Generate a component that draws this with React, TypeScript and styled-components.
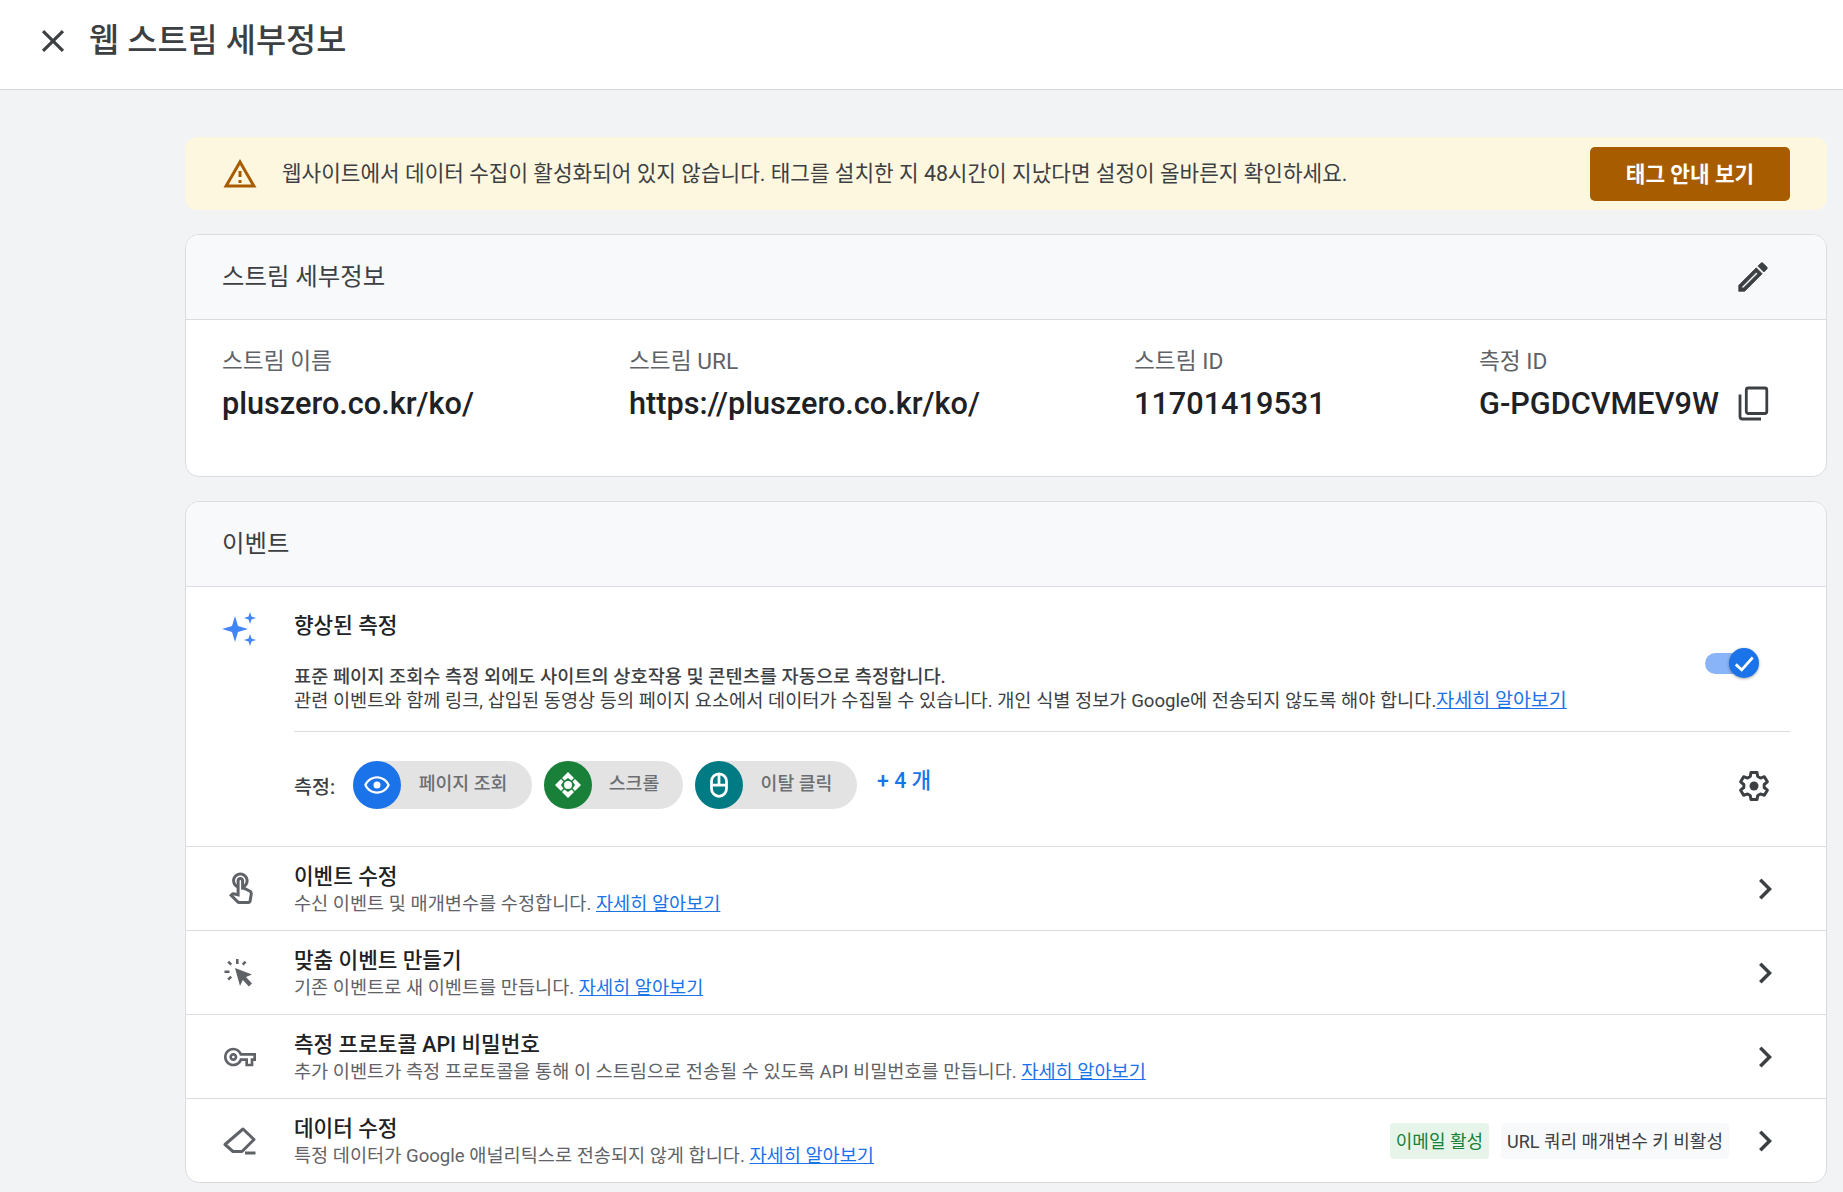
import React from "react";
import styled, { createGlobalStyle } from "styled-components";

const Global = createGlobalStyle`
  html, body { margin: 0; padding: 0; background: #f1f3f4; }
  body { font-family: Roboto, "Noto Sans CJK KR", sans-serif; color: #202124; }
  * { box-sizing: border-box; }
`;

const Page = styled.div`
  width: 1843px;
  height: 1192px;
  overflow: hidden;
  background: #f1f3f4;
`;
const TopBar = styled.header`
  height: 90px;
  background: #fff;
  border-bottom: 1px solid #d5d7da;
  display: flex;
  align-items: center;
  padding-left: 34px;
  gap: 17px;
  padding-bottom: 8px;
`;
const PageTitle = styled.h1`
  margin: 0 0 7px;
  font-size: 32.75px;
  font-weight: 500;
  color: #3c4043;
`;
const Main = styled.main`
  padding: 47px 16px 0 185px;
  display: flex;
  flex-direction: column;
`;
const Alert = styled.div`
  height: 73px;
  background: #fef7e0;
  border-radius: 12px;
  display: flex;
  align-items: center;
  padding: 0 37px;
  margin-bottom: 24px;
`;
const AlertText = styled.div`
  flex: 1;
  margin: 0 0 4px 24px;
  font-size: 21.33px;
  color: #3c4043;
`;
const AlertButton = styled.button`
  width: 200px;
  height: 54px;
  flex: none;
  border: 0;
  border-radius: 5px;
  padding: 0 0 2px;
  background: #a85c00;
  color: #fff;
  font: 700 21.33px Roboto, "Noto Sans CJK KR", sans-serif;
`;
const Card = styled.section<{ $mb?: number }>`
  background: #fff;
  border: 1px solid #dadce0;
  border-radius: 14px;
  overflow: hidden;
  margin-bottom: ${(p) => p.$mb ?? 0}px;
`;
const CardHeader = styled.div`
  height: 85px;
  background: #f8f9fa;
  border-bottom: 1px solid #dadce0;
  display: flex;
  align-items: center;
  justify-content: space-between;
  padding: 0 54px 0 36px;
`;
const CardTitle = styled.h2`
  margin: 0 0 6px;
  font-size: 24.4px;
  font-weight: 400;
  color: #3c4043;
`;
const DataRow = styled.div`
  height: 156px;
  display: grid;
  grid-template-columns: 407px 505px 345px 1fr;
  padding: 25px 56px 0 36px;
`;
const Field = styled.div`
  display: flex;
  flex-direction: column;
`;
const FieldLabel = styled.div`
  font-size: 22.7px;
  line-height: 33px;
  color: #5f6368;
`;
const FieldValue = styled.div`
  margin-top: 4px;
  font-size: 30.67px;
  line-height: 44px;
  font-weight: 500;
  color: #202124;
  display: flex;
  align-items: center;
  justify-content: space-between;
`;
const Enhanced = styled.div`
  height: 260px;
  display: flex;
  border-bottom: 1px solid #dadce0;
  padding: 25px 36px 0 37px;
`;
const IconCol = styled.div`
  width: 71px;
  flex: none;
  margin-left: -1px;
  margin-right: 1px;
`;
const EnhBody = styled.div`
  flex: 1;
`;
const EnhTop = styled.div`
  height: 120px;
  border-bottom: 1px solid #dadce0;
  display: flex;
  justify-content: space-between;
`;
const EnhTitle = styled.div`
  font-size: 21.33px;
  line-height: 28px;
  font-weight: 500;
  color: #202124;
`;
const EnhDesc = styled.div`
  margin-top: 26px;
  font-size: 18.65px;
  line-height: 23px;
  color: #3c4043;
`;
const Strong = styled.div`
  font-weight: 500;
`;
const Link = styled.a`
  color: #1a73e8;
  text-decoration: underline;
`;
const EnhLink = styled(Link)`
  font-size: 19.5px;
`;
const Toggle = styled.div`
  position: relative;
  width: 40px;
  height: 21px;
  margin: 41px 45px 0 0;
  border-radius: 11px;
  background: #8ab4f8;
`;
const Knob = styled.div`
  position: absolute;
  right: -14px;
  top: -5px;
  width: 30px;
  height: 30px;
  border-radius: 50%;
  background: #1a73e8;
  box-shadow: 0 1px 3px rgba(0, 0, 0, 0.35);
  display: flex;
  align-items: center;
  justify-content: center;
`;
const Metrics = styled.div`
  display: flex;
  align-items: center;
  margin-top: 29px;
  height: 48px;
`;
const MetricLabel = styled.div`
  width: 59px;
  font-size: 19.5px;
  font-weight: 500;
  color: #3c4043;
`;
const Pill = styled.div<{ $w: number }>`
  width: ${(p) => p.$w}px;
  height: 48px;
  margin-right: 12px;
  border-radius: 24px;
  background: #e3e3e3;
  display: flex;
  align-items: center;
  font-size: 18.3px;
  font-weight: 500;
  color: #6b6e72;
`;
const PillDot = styled.div<{ $c: string }>`
  width: 48px;
  height: 48px;
  flex: none;
  border-radius: 50%;
  background: ${(p) => p.$c};
  display: flex;
  align-items: center;
  justify-content: center;
`;
const PillText = styled.span`
  flex: 1;
  text-align: center;
  padding: 0 7px 6px 0;
`;
const More = styled.div`
  margin: -13px 0 0 8px;
  font-size: 21.33px;
  font-weight: 500;
  color: #1a73e8;
  flex: 1;
`;
const GearWrap = styled.div`
  padding: 2px 18px 0 0;
  display: flex;
`;
const Row = styled.div<{ $last?: boolean }>`
  height: ${(p) => (p.$last ? 83 : 84)}px;
  display: flex;
  align-items: center;
  padding: 0 40px 0 37px;
  border-bottom: ${(p) => (p.$last ? "0" : "1px solid #dadce0")};
`;
const RowIcon = styled.div<{ $pl?: number }>`
  width: 71px;
  flex: none;
  display: flex;
  padding-left: ${(p) => p.$pl ?? 0}px;
`;
const RowText = styled.div`
  flex: 1;
  margin-top: 4px;
`;
const RowTitle = styled.div`
  font-size: 21.33px;
  line-height: 28px;
  font-weight: 500;
  color: #202124;
`;
const RowSub = styled.div`
  font-size: 18.62px;
  line-height: 26.5px;
  color: #5f6368;
`;
const Chip = styled.div<{ $green?: boolean }>`
  height: 36px;
  padding: 0 6px 2px;
  margin-right: 12px;
  border-radius: 4px;
  display: flex;
  align-items: center;
  font-size: 18px;
  background: ${(p) => (p.$green ? "#e6f4ea" : "#f8f9fa")};
  color: ${(p) => (p.$green ? "#188038" : "#3c4043")};
`;
const ChipGroup = styled.div`
  display: flex;
  margin-right: 3px;
`;

const I = ({ d, s = 24, c = "#3c4043", w = 0 }: { d: string; s?: number; c?: string; w?: number }) => (
  <svg width={s} height={s} viewBox="0 0 24 24" fill={c} stroke={c} strokeWidth={w} style={{ flex: "none" }}>
    <path d={d} />
  </svg>
);

const close = "M19 6.41L17.59 5 12 10.59 6.41 5 5 6.41 10.59 12 5 17.59 6.41 19 12 13.41 17.59 19 19 17.59 13.41 12z";
const warn = "M12 5.99L19.53 19H4.47L12 5.99M12 2L1 21h22L12 2zm1 14h-2v2h2v-2zm0-6h-2v4h2v-4z";
const edit = "M3 17.25V21h3.75L17.81 9.94l-3.75-3.75L3 17.25zM5.92 19H5v-.92l9.06-9.06.92.92L5.92 19zM20.71 5.63l-2.34-2.34c-.2-.2-.45-.29-.71-.29s-.51.1-.7.29l-1.83 1.83 3.75 3.75 1.83-1.83c.39-.39.39-1.02 0-1.41z";
const chevron = "M10 6L8.59 7.41 13.17 12l-4.58 4.59L10 18l6-6z";
const touch = "M18.19,12.44l-3.24-1.62c1.29-1,2.12-2.56,2.12-4.32c0-3.03-2.47-5.5-5.5-5.5s-5.5,2.47-5.5,5.5c0,2.13,1.22,3.98,3,4.89v3.26c-2.15-0.46-2.02-0.44-2.26-0.44c-0.53,0-1.03,0.21-1.41,0.59L4,16.22l5.09,5.09C9.52,21.75,10.12,22,10.74,22h6.3c0.98,0,1.81-0.7,1.97-1.67l0.8-4.71C20.03,14.32,19.38,13.04,18.19,12.44z M17.84,15.29L17.04,20h-6.3c-0.09,0-0.17-0.04-0.24-0.1l-3.68-3.68l4.25,0.89V6.5c0-0.28,0.22-0.5,0.5-0.5c0.28,0,0.5,0.22,0.5,0.5v6h1.76l3.46,1.73C17.69,14.43,17.91,14.86,17.84,15.29z M8.07,6.5c0-1.93,1.57-3.5,3.5-3.5s3.5,1.57,3.5,3.5c0,0.95-0.38,1.81-1,2.44V6.5c0-1.38-1.12-2.5-2.5-2.5c-1.38,0-2.5,1.12-2.5,2.5v2.44C8.45,8.31,8.07,7.45,8.07,6.5z";
const key = "M22 19h-6v-4h-2.68c-1.14 2.42-3.6 4-6.32 4-3.86 0-7-3.14-7-7s3.14-7 7-7c2.72 0 5.17 1.58 6.32 4H24v6h-2v4zm-4-2h2v-4h2v-2H11.94l-.23-.67C11.01 8.34 9.11 7 7 7c-2.76 0-5 2.24-5 5s2.24 5 5 5c2.11 0 4.01-1.34 4.71-3.33l.23-.67H18v4zM7 15c-1.65 0-3-1.35-3-3s1.35-3 3-3 3 1.35 3 3-1.35 3-3 3zm0-4c-.55 0-1 .45-1 1s.45 1 1 1 1-.45 1-1-.45-1-1-1z";
const eye = "M12 6.5c3.79 0 7.17 2.13 8.82 5.5-1.65 3.37-5.02 5.5-8.82 5.5S4.83 15.37 3.18 12C4.83 8.63 8.21 6.5 12 6.5m0-2C7 4.5 2.73 7.61 1 12c1.73 4.39 6 7.5 11 7.5s9.27-3.11 11-7.5c-1.73-4.39-6-7.5-11-7.5zM12 9a3 3 0 1 1 0 6 3 3 0 0 1 0-6z";

const Gear = () => (
  <svg width="36" height="36" viewBox="0 0 24 24" style={{ flex: "none" }}>
    <path
      fill="none"
      stroke="#3c4043"
      strokeWidth="2"
      strokeLinejoin="round"
      d="M10 3h4l.5 2.700 1.800 1 2.600-.9 2 3.400-2.100 1.800v2l2.100 1.800-2 3.400-2.600-.9-1.800 1L14 21h-4l-.5-2.700-1.800-1-2.600.9-2-3.400 2.100-1.800v-2L3.100 9.200l2-3.400 2.600.9 1.800-1z"
    />
    <circle cx="12" cy="12" r="3" fill="#3c4043" />
  </svg>
);
const Copy = () => (
  <svg width="33" height="36" viewBox="0 0 33 36" fill="none" stroke="#3c4043" strokeWidth="2.8">
    <rect x="9.3" y="2" width="20.5" height="25.5" rx="2" />
    <path d="M3 8.5V30.5a2.5 2.5 0 0 0 2.5 2.5H24" />
  </svg>
);
const Sparkle = () => (
  <svg width="36" height="34" viewBox="0 0 36 34" fill="#4285f4">
    <path d="M13 4 16 14 26 17 16 20 13 30 10 20 0 17 10 14z" />
    <path d="M28 0 29.500 4.500 34 6 29.500 7.500 28 12 26.500 7.500 22 6 26.500 4.500z" />
    <path d="M28 22 29.500 26.500 34 28 29.500 29.500 28 34 26.500 29.500 22 28 26.500 26.500z" />
  </svg>
);
const Cursor = () => (
  <svg width="32" height="30" viewBox="0 0 30 30" fill="#5f6368">
    <path d="M11 10 28 16.500 22 19 28 25.500 24.800 28.500 18.800 22 16 28z" />
    <path d="M12 1h2.600v5H12zM.5 12.500h5v2.600h-5z" />
    <path d="m3.300 4.600 1.800-1.800 3 3-1.800 1.800zM20.700 2.800l1.800 1.800-2.900 3-1.800-1.800zM6.300 17.700l1.800 1.800-3 3-1.800-1.800z" />
  </svg>
);
const Eraser = () => (
  <svg width="34" height="30" viewBox="0 0 34 30" fill="none" stroke="#5f6368" strokeWidth="3" strokeLinejoin="round">
    <path d="M20 3 31 13.500 19 25.500H10L2 18.500z" />
    <path d="M22 27h10.500" />
  </svg>
);
const ScrollMark = () => (
  <svg width="30" height="30" viewBox="0 0 30 30" fill="#fff">
    <path d="M15 2 21 8 18.600 10.400 15 8 11.400 10.400 9 8zM15 28 9 22 11.400 19.600 15 22 18.600 19.600 21 22zM2 15 8 9 10.400 11.400 8 15 10.400 18.600 8 21zM28 15 22 21 19.600 18.600 22 15 19.600 11.400 22 9z" />
    <circle cx="15" cy="15" r="4" />
  </svg>
);
const MouseMark = () => (
  <svg width="30" height="30" viewBox="0 0 24 24" fill="none" stroke="#fff" strokeWidth="2.2">
    <rect x="6" y="3" width="12" height="18" rx="6" />
    <path d="M12 3v9M6.500 12h11" />
  </svg>
);
const Check = () => (
  <svg width="22" height="22" viewBox="0 0 24 24" fill="none" stroke="#fff" strokeWidth="3">
    <path d="M3 13.500 9.500 19.500 21.500 6" />
  </svg>
);

const rows = [
  { icon: <I d={touch} s={36} c="#5f6368" />, pl: 0, title: "이벤트 수정", sub: "수신 이벤트 및 매개변수를 수정합니다. " },
  { icon: <Cursor />, pl: 0, title: "맞춤 이벤트 만들기", sub: "기존 이벤트로 새 이벤트를 만듭니다. " },
  { icon: <I d={key} s={32} c="#5f6368" />, pl: 1, title: "측정 프로토콜 API 비밀번호", sub: "추가 이벤트가 측정 프로토콜을 통해 이 스트림으로 전송될 수 있도록 API 비밀번호를 만듭니다. " },
];

export default function App() {
  return (
    <Page>
      <Global />
      <TopBar>
        <I d={close} s={38} c="#3c4043" />
        <PageTitle>웹 스트림 세부정보</PageTitle>
      </TopBar>
      <Main>
        <Alert>
          <I d={warn} s={36} c="#a85c00" />
          <AlertText>웹사이트에서 데이터 수집이 활성화되어 있지 않습니다. 태그를 설치한 지 48시간이 지났다면 설정이 올바른지 확인하세요.</AlertText>
          <AlertButton>태그 안내 보기</AlertButton>
        </Alert>
        <Card $mb={24}>
          <CardHeader>
            <CardTitle>스트림 세부정보</CardTitle>
            <I d={edit} s={38} w={0.5} />
          </CardHeader>
          <DataRow>
            <Field>
              <FieldLabel>스트림 이름</FieldLabel>
              <FieldValue>pluszero.co.kr/ko/</FieldValue>
            </Field>
            <Field>
              <FieldLabel>스트림 URL</FieldLabel>
              <FieldValue>https://pluszero.co.kr/ko/</FieldValue>
            </Field>
            <Field>
              <FieldLabel>스트림 ID</FieldLabel>
              <FieldValue>11701419531</FieldValue>
            </Field>
            <Field>
              <FieldLabel>측정 ID</FieldLabel>
              <FieldValue>
                G-PGDCVMEV9W
                <Copy />
              </FieldValue>
            </Field>
          </DataRow>
        </Card>
        <Card>
          <CardHeader>
            <CardTitle>이벤트</CardTitle>
          </CardHeader>
          <Enhanced>
            <IconCol>
              <Sparkle />
            </IconCol>
            <EnhBody>
              <EnhTop>
                <div>
                  <EnhTitle>향상된 측정</EnhTitle>
                  <EnhDesc>
                    <Strong>표준 페이지 조회수 측정 외에도 사이트의 상호작용 및 콘텐츠를 자동으로 측정합니다.</Strong>
                    관련 이벤트와 함께 링크, 삽입된 동영상 등의 페이지 요소에서 데이터가 수집될 수 있습니다. 개인 식별 정보가 Google에 전송되지 않도록 해야 합니다.
                    <EnhLink>자세히 알아보기</EnhLink>
                  </EnhDesc>
                </div>
                <Toggle>
                  <Knob>
                    <Check />
                  </Knob>
                </Toggle>
              </EnhTop>
              <Metrics>
                <MetricLabel>측정:</MetricLabel>
                <Pill $w={179}>
                  <PillDot $c="#1a73e8">
                    <I d={eye} s={28} c="#fff" />
                  </PillDot>
                  <PillText>페이지 조회</PillText>
                </Pill>
                <Pill $w={139}>
                  <PillDot $c="#188038">
                    <ScrollMark />
                  </PillDot>
                  <PillText>스크롤</PillText>
                </Pill>
                <Pill $w={162}>
                  <PillDot $c="#007b83">
                    <MouseMark />
                  </PillDot>
                  <PillText>이탈 클릭</PillText>
                </Pill>
                <More>+ 4 개</More>
                <GearWrap>
                  <Gear />
                </GearWrap>
              </Metrics>
            </EnhBody>
          </Enhanced>
          {rows.map((r) => (
            <Row key={r.title}>
              <RowIcon $pl={r.pl}>{r.icon}</RowIcon>
              <RowText>
                <RowTitle>{r.title}</RowTitle>
                <RowSub>
                  {r.sub}
                  <Link>자세히 알아보기</Link>
                </RowSub>
              </RowText>
              <I d={chevron} s={42} />
            </Row>
          ))}
          <Row $last>
            <RowIcon>
              <Eraser />
            </RowIcon>
            <RowText>
              <RowTitle>데이터 수정</RowTitle>
              <RowSub>
                특정 데이터가 Google 애널리틱스로 전송되지 않게 합니다. <Link>자세히 알아보기</Link>
              </RowSub>
            </RowText>
            <ChipGroup>
              <Chip $green>이메일 활성</Chip>
              <Chip>URL 쿼리 매개변수 키 비활성</Chip>
            </ChipGroup>
            <I d={chevron} s={42} />
          </Row>
        </Card>
      </Main>
    </Page>
  );
}
